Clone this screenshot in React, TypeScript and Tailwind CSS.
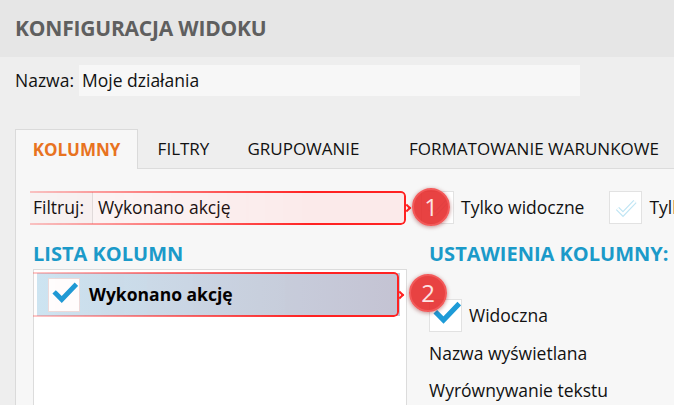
import React from 'react';

function Check({ className = '' }: { className?: string }) {
  return (
    <svg viewBox="0 0 24 24" className={className} fill="none">
      <path d="M3.5 12.5l5.5 5.5L21 5.5" stroke="#1e9bd7" strokeWidth="4.4" strokeLinecap="square" />
    </svg>
  );
}

function FaintCheck({ className = '' }: { className?: string }) {
  return (
    <svg viewBox="0 0 24 24" className={className} fill="none">
      <path d="M3.5 12.5l5.5 5.5L21 5.5" stroke="#bfe5f4" strokeWidth="4.5" strokeLinejoin="miter" />
      <path d="M3.5 12.5l5.5 5.5L21 5.5" stroke="#ffffff" strokeWidth="2.2" />
    </svg>
  );
}

function Highlight({ className, fill }: { className: string; fill: string }) {
  return (
    <div className={`absolute pointer-events-none ${className}`}>
      <div className={`absolute inset-0 border-2 border-l-0 border-[#f22] rounded-r-[5px] shadow-[0_0_6px_rgba(255,0,0,0.35)] [mask-image:linear-gradient(to_right,rgba(0,0,0,0.25),black_75%)] ${fill}`} />
      <div className="absolute right-[-4px] top-1/2 -mt-[3px] w-[6px] h-[6px] border-t-2 border-r-2 border-[#f22] rotate-45" />
    </div>
  );
}

function Badge({ n, className }: { n: string; className: string }) {
  return (
    <div
      className={`absolute w-[38px] h-[38px] rounded-full bg-[#e52d2d]/90 border-2 border-[#f25a5a] shadow-[0_1px_4px_rgba(120,0,0,0.45)] flex items-center justify-center text-[24px] leading-none text-[#fde3e3] ${className}`}
    >
      {n}
    </div>
  );
}

export default function App() {
  const font = "font-['Open_Sans','Noto_Sans',sans-serif]";
  return (
    <div className={`relative w-[674px] h-[405px] overflow-hidden bg-[#eeeeee] text-[#111] ${font}`}>
      {/* header */}
      <div className="h-[57px] bg-[#e6e6e6] flex items-center px-[15px]">
        <h1 className="text-[21px] font-bold text-[#5f5f5f] tracking-[-0.2px]">KONFIGURACJA WIDOKU</h1>
      </div>

      {/* name */}
      <div className="mt-[8px] flex items-center pl-[15px] text-[17.5px]">
        <span className="w-[64px]">Nazwa:</span>
        <div className="w-[501px] h-[31px] bg-[#f7f7f7] flex items-center pl-[3px]">Moje działania</div>
      </div>

      {/* tabs */}
      <div className="mt-[33px] flex pl-[15px] text-[17px]">
        <div className="w-[123px] shrink-0 h-[40px] bg-[#f7f7f7] border border-b-0 border-[#dadada] flex items-center justify-center font-bold text-[#e8731f]">
          KOLUMNY
        </div>
        <div className="flex-1 flex border-b border-[#dcdcdc]">
          <div className="w-[91px] shrink-0 flex items-center justify-center">FILTRY</div>
          <div className="w-[149px] shrink-0 flex items-center justify-center">GRUPOWANIE</div>
          <div className="w-[312px] shrink-0 flex items-center justify-center whitespace-nowrap">FORMATOWANIE WARUNKOWE</div>
        </div>
      </div>

      {/* panel */}
      <div className="ml-[15px] h-[300px] bg-[#f7f7f7] border-l border-[#dadada] pl-[17px] pt-[22px] text-[17.5px] overflow-hidden">
        <div className="flex items-center h-[33px] whitespace-nowrap">
          <span className="w-[59px] shrink-0">Filtruj:</span>
          <div className="w-[314px] shrink-0 h-[32px] bg-[#fbfbfb] border-l border-[#e0e0e0] flex items-center pl-[5px]">Wykonano akcję</div>
          <div className="ml-[15px] shrink-0 w-[33px] h-[33px] bg-white border border-[#e2e2e2] flex items-center justify-center">
            <FaintCheck className="w-[24px] h-[24px]" />
          </div>
          <span className="ml-[7px] shrink-0">Tylko widoczne</span>
          <div className="ml-[25px] w-[33px] h-[33px] bg-white border border-[#e2e2e2] flex items-center justify-center shrink-0">
            <FaintCheck className="w-[24px] h-[24px]" />
          </div>
          <span className="ml-[7px] shrink-0">Tylko zaznaczone</span>
        </div>

        <div className="flex mt-[16px]">
          <div className="w-[374px] shrink-0">
            <h2 className="text-[20px] font-bold text-[#1b9ac9] leading-[28px]">LISTA KOLUMN</h2>
            <div className="mt-[1px] h-[200px] bg-white border border-[#dcdcdc] p-[3px] pr-[6px]">
              <div className="h-[43px] bg-gradient-to-r from-[#cde6f3] to-[#c3c9d9] flex items-center pl-[11px]">
                <div className="w-[32px] h-[34px] bg-white border border-[#ecdcdc] flex items-end justify-end pr-[1px] pb-[5px]">
                  <Check className="w-[26px] h-[26px]" />
                </div>
                <span className="ml-[9px] font-bold text-[17.5px] text-black">Wykonano akcję</span>
              </div>
            </div>
          </div>
          <div className="ml-[22px] shrink-0">
            <h2 className="text-[20px] font-bold text-[#1b9ac9] leading-[28px] whitespace-nowrap">USTAWIENIA KOLUMNY:</h2>
            <div className="mt-[31px] flex items-center">
              <div className="w-[33px] h-[33px] bg-white border border-[#e2e2e2] flex items-end justify-end pb-[4px]">
                <Check className="w-[28px] h-[28px] -mt-[6px]" />
              </div>
              <span className="ml-[7px]">Widoczna</span>
            </div>
            <div className="mt-[9px] leading-[24px]">Nazwa wyświetlana</div>
            <div className="mt-[13px] leading-[24px] whitespace-nowrap">Wyrównywanie tekstu</div>
          </div>
        </div>
      </div>

      {/* annotations */}
      <Highlight className="left-[30px] top-[191px] w-[376px] h-[34px]" fill="bg-[#ff2020]/[0.08]" />
      <Badge n="1" className="left-[412px] top-[188px]" />
      <Highlight className="left-[33px] top-[272px] w-[366px] h-[45px]" fill="bg-[#ff2020]/[0.03]" />
      <Badge n="2" className="left-[409px] top-[274px]" />
    </div>
  );
}
